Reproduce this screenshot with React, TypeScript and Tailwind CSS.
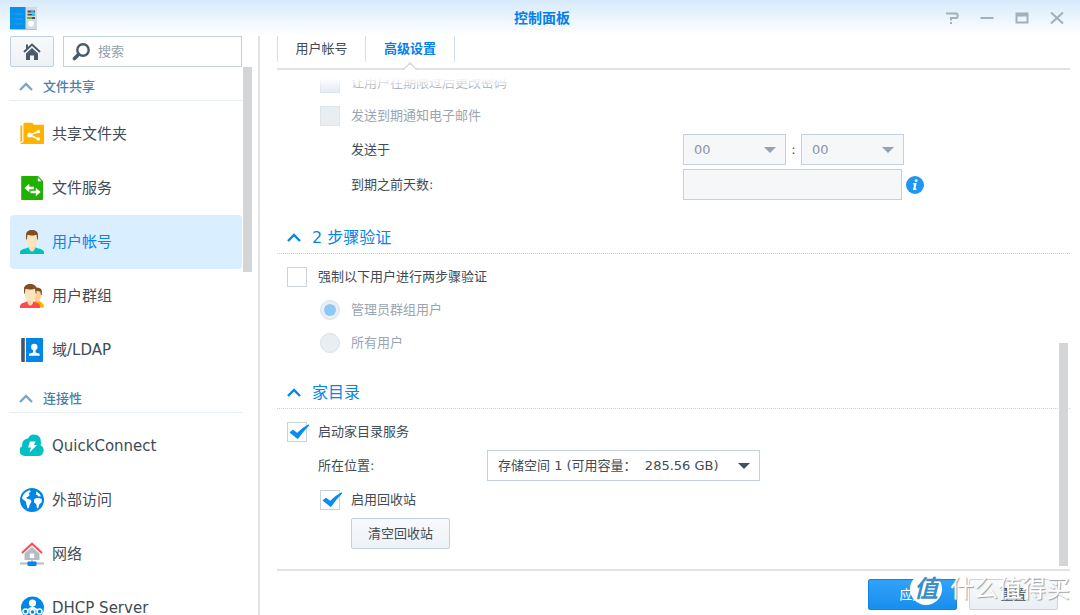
import React, { useState } from "react";

interface NavItem {
  id: string;
  label: string;
  icon: React.ReactNode;
}

interface NavGroup {
  title: string;
  items: NavItem[];
}

const SharedFolderIcon = () => (
  <svg viewBox="0 0 24 24" className="size-6">
    <path d="M.4 3.500h1.800V19L.4 20.500z" fill="#ffb300" />
    <path d="M3.400 2.200Q3.400.8 4.700.8h7.500l1.800 2h9.200q.8 0 .8.800v17.500q0 .9-.9.900H.9q-.5 0-.5-.6l3-1.400z" fill="#ffb300" />
    <path d="M18.500 9.500 9.800 13l8.700 4" fill="none" stroke="#fff" strokeWidth="1.500" />
    <circle cx="9.800" cy="13" r="2.500" fill="#fff" />
    <circle cx="18.400" cy="9.600" r="1.700" fill="#fff" />
    <circle cx="18.400" cy="16.900" r="1.700" fill="#fff" />
  </svg>
);

const FileServiceIcon = () => (
  <svg viewBox="0 0 24 24" className="size-6">
    <path d="M2 0h16l5 5v18q0 1-1 1H2q-.8 0-.8-1V1q0-1 .8-1z" fill="#20b100" />
    <path d="M17.800 1.500v3.800h3.800z" fill="#fff" />
    <path d="M4.500 12 9.300 7.800v3h4.500v2.400H9.300v3zM20.600 16l-4.800-4.200v3h-5.300v2.400h5.300v3z" fill="#fff" />
  </svg>
);

const UserIcon = () => (
  <svg viewBox="0 0 24 24" className="size-6">
    <path d="M0 24v-1.500c0-3.500 5-3.500 8.500-5h7c3.500 1.500 8.500 1.500 8.500 5V24z" fill="#00bfbf" />
    <path d="M9 13.500h6v4.700c0 1-1.500 3.300-3 3.300s-3-2.300-3-3.300z" fill="#fddcae" />
    <path d="M6.500 5h11v5c0 4-2.800 7.500-5.500 7.500S6.500 14 6.500 10z" fill="#ffe3bc" />
    <path d="M6 9.500V5c0-3.500 2.500-5 6-5s6 1.500 6 5v4.500h-.8L16.500 4.800c-2 1-6.500 1-9 0L6.800 9.500z" fill="#7d5026" />
  </svg>
);

const GroupIcon = () => (
  <svg viewBox="0 0 24 24" className="size-6">
    <path d="M15 23.500v-7h4c1 1.500 5 2.500 5 6v1z" fill="#ffb300" />
    <path d="M14 6h7.500v4.500c0 3-1.500 6-3.500 7.500l-4-2z" fill="#fdd09a" />
    <path d="M15 3.500c4-.5 6.800 1 6.800 3.500v4H21l-.8-3.500L15 6.500z" fill="#7d5026" />
    <path d="M0 24v-1.500C0 19 4 19 6.500 17.500H14c3 1.500 6 1.500 6 5V24z" fill="#ff4b50" />
    <path d="M7.500 13.500h5.500v4.700c0 1-1 3.300-2.700 3.300s-2.800-2.300-2.800-3.300z" fill="#fddcae" />
    <path d="M4.500 5H16v5c0 4-3 7.700-5.700 7.700S4.500 14 4.500 10z" fill="#ffe3bc" />
    <path d="M4 9.500V5c0-3.500 2.700-5 6.200-5s6.300 1.500 6.300 5v4.500h-.8L15 4.800c-2 1-7 1-9.500 0L4.800 9.500z" fill="#7d5026" />
  </svg>
);

const DirectoryIcon = () => (
  <svg viewBox="0 0 24 24" className="size-6">
    <path d="M2.200 0h2.600v24H2.200q-1 0-1-1V1q0-1 1-1z" fill="#465663" />
    <path d="M6 0h16q1 0 1 1v22q0 1-1 1H6z" fill="#0086e5" />
    <circle cx="14.300" cy="9" r="3.200" fill="#fff" />
    <path d="M13 11h2.600v3.400l4 1.300v2H9v-2l4-1.300z" fill="#fff" />
  </svg>
);

const QuickConnectIcon = () => (
  <svg viewBox="0 0 24 24" className="size-6">
    <path
      d="M5 22A5.200 5.200 0 0 1 2.200 12.200Q1.500 5.500 8 4.500A6.700 6.700 0 0 1 20.800 7.500q.4 2-.2 3.800A5.700 5.700 0 0 1 18.500 22z"
      fill="#00c0c3"
    />
    <path d="M10 7.500h5.500l-1.500 3.500h3L9.500 18.500l1.500-5H8z" fill="#fff" />
  </svg>
);

const GlobeIcon = () => (
  <svg viewBox="0 0 24 24" className="size-6">
    <circle cx="12" cy="12" r="12" fill="#0086e5" />
    <path d="M2 10.500C3 6 6 3 10 2.300l.7 1.500-2 1.400 1 2L7.500 9l-1.500.7 1.200 1 3.300.8 1 2-1.700 3-1 3.500-1.300.5-1.200-4.500-.5-2.500-2-1.500z" fill="#fff" />
    <path d="m14 11.500 2.500-1.500 3.500.3 2 1-.5 3.200-2 1.500-1.200 4-1.300.5-.8-4.500-2.200-1.500zM16.300 3.500l2.700 1.800 2 3-2.500.2-1.300-1.500-1.400-.5z" fill="#fff" />
  </svg>
);

const NetworkIcon = () => (
  <svg viewBox="0 0 24 24" className="size-6">
    <path d="M4.500 11.500 12 5l7.500 6.500V18h-15z" fill="#b2bdc7" />
    <rect x="9.800" y="11.500" width="4.400" height="4.500" fill="#fff" />
    <path d="M11.200 17.500h1.600V20h-1.600zM0 20.600h24v1.800H0z" fill="#b2bdc7" />
    <rect x="7.500" y="19.500" width="9" height="4.500" rx="0.800" fill="#0086e5" />
    <path d="M2 11 12 1.700 22 11" fill="none" stroke="#ff4b50" strokeWidth="2" />
  </svg>
);

const DhcpIcon = () => (
  <svg viewBox="0 0 24 24" className="size-6">
    <circle cx="12.500" cy="12" r="11.500" fill="#0086e5" />
    <circle cx="12.500" cy="7" r="3.600" fill="#fff" />
    <path d="M12.500 9v6M12.500 11 6 15M12.500 11l6.500 4" stroke="#fff" strokeWidth="1.600" />
    <g fill="#0086e5" stroke="#fff" strokeWidth="1.500">
      <circle cx="5.500" cy="15.500" r="2.500" />
      <circle cx="12.500" cy="16" r="2.500" />
      <circle cx="19.500" cy="15.500" r="2.500" />
    </g>
  </svg>
);

const navGroups: NavGroup[] = [
  {
    title: "文件共享",
    items: [
      { id: "shared", label: "共享文件夹", icon: <SharedFolderIcon /> },
      { id: "file", label: "文件服务", icon: <FileServiceIcon /> },
      { id: "user", label: "用户帐号", icon: <UserIcon /> },
      { id: "group", label: "用户群组", icon: <GroupIcon /> },
      { id: "ldap", label: "域/LDAP", icon: <DirectoryIcon /> },
    ],
  },
  {
    title: "连接性",
    items: [
      { id: "quickconnect", label: "QuickConnect", icon: <QuickConnectIcon /> },
      { id: "external", label: "外部访问", icon: <GlobeIcon /> },
      { id: "network", label: "网络", icon: <NetworkIcon /> },
      { id: "dhcp", label: "DHCP Server", icon: <DhcpIcon /> },
    ],
  },
];

const Chevron = () => (
  <svg viewBox="0 0 14 9" className="w-3.5 h-[9px]" fill="none" stroke="currentColor" strokeWidth="2.400">
    <path d="M1 8 7 2l6 6" />
  </svg>
);

const TitleBar = () => {
  const buttonClass = "flex w-[35px] h-9 items-center justify-center";
  return (
    <header className="flex h-9 shrink-0 items-center bg-linear-to-b from-[#d7eafb] to-white px-1.5">
      <div className="flex flex-1 pl-1">
        <svg viewBox="0 0 27 23" className="w-[27px] h-[23px]">
          <rect x="0" y="1" width="27" height="22" rx="1" fill="#b5bfc9" />
          <rect x="15" y="0" width="12" height="22" fill="#d3dae0" />
          <rect x="0" y="0" width="15.500" height="22" fill="#0a90ea" />
          <path d="M2 7h1M5 7h8M2 12h1M5 12h8M2 17h1M5 17h8" stroke="#16aef2" strokeWidth="1" />
          <path d="M17.500 4.500H25M17.500 7.700H25M17.500 11H25" stroke="#46525e" strokeWidth="1.800" />
          <path d="M21 4.500h3M22 7.700h3" stroke="#1dc5f2" strokeWidth="1.800" />
          <path d="M17.500 11H22" stroke="#63d000" strokeWidth="1.800" />
          <circle cx="21" cy="16.800" r="3" fill="#fff" />
        </svg>
      </div>
      <h1 className="text-sm leading-5 font-bold text-[#057feb]">控制面板</h1>
      <div className="flex flex-1 justify-end">
        <button aria-label="帮助" className={buttonClass}>
          <svg viewBox="0 0 14 12" className="w-3.5 h-3" fill="none" stroke="#a3afba" strokeWidth="2">
            <path d="M1 1.500h10.500q1 0 1 1v2.500q0 1-1 1H6v2.500M6 10v2" />
          </svg>
        </button>
        <button aria-label="最小化" className={buttonClass}>
          <svg viewBox="0 0 14 12" className="w-3.5 h-3" stroke="#a3afba" strokeWidth="2">
            <path d="M0.500 6h13" />
          </svg>
        </button>
        <button aria-label="最大化" className={buttonClass}>
          <svg viewBox="0 0 14 12" className="w-3.5 h-3">
            <path d="M0.500 0.500h13v11h-13zM2.500 4.500v5h9v-5z" fill="#a3afba" fillRule="evenodd" />
          </svg>
        </button>
        <button aria-label="关闭" className={buttonClass}>
          <svg viewBox="0 0 14 12" className="w-3.5 h-3" stroke="#a3afba" strokeWidth="2">
            <path d="M1 0.500 13 11.500M13 0.500 1 11.500" />
          </svg>
        </button>
      </div>
    </header>
  );
};

const Sidebar = () => {
  const [active, setActive] = useState("user");

  return (
    <aside className="flex w-[260px] shrink-0 flex-col border-r-2 border-[#e0e2e4] pl-2.5">
      <div className="flex shrink-0 gap-[9px] pr-4">
        <button
          aria-label="主页"
          className="flex h-[31px] w-11 items-center justify-center rounded-xs border border-[#c4d0dd] bg-linear-to-b from-[#f7fafc] to-[#edf2f7]"
        >
          <svg viewBox="0 0 18 18" className="size-[18px]">
            <path d="M3 10.500 9 5l6 5.500V17h-4v-4.500H7V17H3z" fill="#4b5a68" />
            <path d="M1 9 9 1.500 17 9M4 6V1.500" fill="none" stroke="#4b5a68" strokeWidth="2" />
          </svg>
        </button>
        <label className="flex h-[31px] min-w-0 flex-1 items-center gap-2 border border-[#c4d0dd] px-2">
          <svg viewBox="0 0 18 18" className="size-[18px] shrink-0" fill="none" stroke="#4b5a68">
            <circle cx="11" cy="7" r="5.700" strokeWidth="2.400" />
            <path d="M6.500 11.500 2.500 15.500" strokeWidth="3.600" strokeLinecap="round" />
          </svg>
          <input
            type="text"
            aria-label="搜索"
            placeholder="搜索"
            className="w-full min-w-0 text-[13px] leading-5 outline-none placeholder:text-[#96a0aa]"
          />
        </label>
      </div>

      <div className="flex min-h-0 flex-1 overflow-hidden">
        <nav className="min-w-0 flex-1">
          {navGroups.map((group) => (
            <section key={group.title} className="pb-0.5">
              <h2 className="border-b border-[#e6edf5]">
                <button className="flex h-[33px] w-full items-center gap-2.5 pt-1.5 pl-[9px] text-[13px] leading-5 font-medium text-[#4a7fa8]">
                  <span className="text-[#7fa5c2]">
                    <Chevron />
                  </span>
                  {group.title}
                </button>
              </h2>
              <ul className="pt-1.5">
                {group.items.map((item) => (
                  <li key={item.id}>
                    <a
                      href={"#" + item.id}
                      onClick={() => setActive(item.id)}
                      className={
                        item.id === active
                          ? "flex h-[54px] items-center gap-2 rounded-sm bg-[#d9eeff] pl-2.5 text-[15px] leading-6 text-[#0686ed]"
                          : "flex h-[54px] items-center gap-2 rounded-sm pl-2.5 text-[15px] leading-6 text-[#414b55]"
                      }
                    >
                      {item.icon}
                      {item.label}
                    </a>
                  </li>
                ))}
              </ul>
            </section>
          ))}
        </nav>
        <div className="w-4 shrink-0 pl-px">
          <div className="h-[205px] w-[9px] bg-[#d3d5d7]" />
        </div>
      </div>
    </aside>
  );
};

interface CheckProps {
  label: string;
  checked?: boolean;
  disabled?: boolean;
}

const CheckRow: React.FC<CheckProps> = ({ label, checked, disabled }) => (
  <label className="flex h-[33px] w-fit items-center gap-[11px] text-[13px] leading-5 text-[#414b55] has-disabled:text-[#9aa5af]">
    <span className="relative flex">
      <input
        type="checkbox"
        defaultChecked={checked}
        disabled={disabled}
        className="peer size-5 appearance-none border border-[#c8d3de] bg-white disabled:border-[#dce4ec] disabled:bg-[#e9eef3]"
      />
      <svg
        viewBox="0 0 20 20"
        className="pointer-events-none absolute top-0 left-0.5 hidden size-5 peer-checked:block"
      >
        <path d="M1.500 10.500 4 8.500 8.200 11.800Q13 6.500 19.500 3.200 13.500 9 8.800 16.200z" fill="#0a8cf0" stroke="#0a8cf0" strokeWidth="1.400" strokeLinejoin="round" />
      </svg>
    </span>
    {label}
  </label>
);

const RadioRow: React.FC<CheckProps> = ({ label, checked }) => (
  <label className="flex h-[33px] w-fit items-center gap-[11px] text-[13px] leading-5 text-[#9aa5af]">
    <span className="relative flex">
      <input
        type="radio"
        name="otp-scope"
        defaultChecked={checked}
        disabled
        className="peer size-5 appearance-none rounded-full border border-[#d9e2ea] bg-[#e9eef3]"
      />
      <span className="absolute inset-1 hidden rounded-full bg-[#90c8f5] peer-checked:block" />
    </span>
    {label}
  </label>
);

interface SelectProps {
  id?: string;
  label?: string;
  value: string;
  wrapperClass: string;
  disabled?: boolean;
}

const SelectBox: React.FC<SelectProps> = ({ id, label, value, wrapperClass, disabled }) => (
  <div className={"relative " + wrapperClass}>
    <select
      id={id}
      aria-label={label}
      disabled={disabled}
      className="h-[31px] w-full appearance-none border border-[#c4d0dd] bg-white pr-7 pl-2.5 text-[13px] leading-5 text-[#414b55] disabled:bg-[#f5f7f9] disabled:text-[#8c959e] disabled:opacity-100"
    >
      <option>{value}</option>
    </select>
    <svg
      viewBox="0 0 12 6"
      className={
        disabled
          ? "pointer-events-none absolute top-[13px] right-2.5 h-1.5 w-3 fill-[#95a2af]"
          : "pointer-events-none absolute top-[13px] right-2.5 h-1.5 w-3 fill-[#414f5c]"
      }
    >
      <path d="M0 0h12L6 6z" />
    </svg>
  </div>
);

const SectionTitle: React.FC<{ title: string }> = ({ title }) => (
  <h2 className="border-b border-dotted border-[#c3d0dd]">
    <button className="flex h-[33px] w-full items-center gap-[11px] pt-0.5 pl-2.5 text-base leading-6 text-[#0686ed]">
      <Chevron />
      {title}
    </button>
  </h2>
);

const Tabs = () => (
  <div role="tablist" className="flex h-[34px] shrink-0 items-start border-b-2 border-[#e0e2e4]">
    <button
      role="tab"
      className="h-[26px] w-22 border-l border-[#d5e0eb] text-[13px] leading-[26px] text-[#414b55]"
    >
      用户帐号
    </button>
    <button
      role="tab"
      aria-selected="true"
      className="relative h-[26px] w-[90px] border-x border-[#d5e0eb] text-[13px] leading-[26px] font-bold text-[#057feb]"
    >
      高级设置
      <svg viewBox="0 0 16 8" className="absolute top-[26px] left-9 h-2 w-4">
        <path d="M1 8 8 1l7 7z" fill="#fff" />
        <path d="M0 7.500h1.500L8 1l6.500 6.500H16" fill="none" stroke="#d9dbdd" strokeWidth="1.500" />
      </svg>
    </button>
  </div>
);

const Settings = () => (
  <div className="relative min-h-0 flex-1 overflow-hidden">
    <div className="-mt-1 pl-[43px]">
      <CheckRow label="让用户在期限过后更改密码" disabled />
      <CheckRow label="发送到期通知电子邮件" disabled />
      <div className="flex flex-col gap-1 pt-0.5 pl-[31px] text-[13px] leading-5 text-[#414b55]">
        <div className="flex items-center">
          <label htmlFor="send-hour" className="w-[332px]">
            发送于
          </label>
          <SelectBox id="send-hour" value="00" wrapperClass="w-[103px]" disabled />
          <span className="w-[15px] text-center">:</span>
          <SelectBox label="分钟" value="00" wrapperClass="w-[103px]" disabled />
        </div>
        <div className="flex items-center">
          <label htmlFor="days" className="w-[332px]">
            到期之前天数:
          </label>
          <input id="days" type="text" disabled className="h-[31px] w-[219px] border border-[#c4d0dd] bg-[#f5f7f9] px-2" />
          <svg viewBox="0 0 18 18" className="ml-1 size-[18px]">
            <circle cx="9" cy="9" r="9" fill="#1e96f2" />
            <circle cx="10.200" cy="4.700" r="1.400" fill="#fff" />
            <path d="M7.400 7h3.300l-1.300 5.600h1.100l-.3 1.400H6.900l1.300-5.600H7.100z" fill="#fff" />
          </svg>
        </div>
      </div>
    </div>

    <section className="pt-5">
      <SectionTitle title="2 步骤验证" />
      <div className="pt-1.5 pl-2.5">
        <CheckRow label="强制以下用户进行两步骤验证" />
        <div className="pl-[33px]">
          <RadioRow label="管理员群组用户" checked />
          <RadioRow label="所有用户" />
        </div>
      </div>
    </section>

    <section className="pt-4">
      <SectionTitle title="家目录" />
      <div className="pt-1.5 pl-2.5 text-[13px] leading-5 text-[#414b55]">
        <CheckRow label="启动家目录服务" checked />
        <div className="flex items-center py-0.5 pl-[31px]">
          <label htmlFor="volume" className="w-[169px]">
            所在位置:
          </label>
          <SelectBox id="volume" value={"存储空间 1 (可用容量：\u00a0 285.56 GB)"} wrapperClass="w-[273px]" />
        </div>
        <div className="pl-[33px]">
          <CheckRow label="启用回收站" checked />
          <button className="mt-0.5 ml-[31px] h-[31px] rounded-xs border border-[#c4d0dd] bg-linear-to-b from-[#f8fafc] to-[#edf2f7] px-4">
            清空回收站
          </button>
        </div>
      </div>
    </section>

    <div className="pointer-events-none absolute inset-x-0 top-0 h-5 bg-linear-to-b from-white from-40% to-transparent" />
    <div className="absolute right-0.5 bottom-[3px] h-[223px] w-[9px] bg-[#d3d5d7]" />
  </div>
);

const Watermark = () => (
  <div className="pointer-events-none absolute right-2.5 bottom-2.5 flex items-center gap-2">
    <span className="flex size-8 items-center justify-center rounded-full bg-white text-2xl leading-8 font-bold text-[#3a8fcb] italic">
      值
    </span>
    <span className="text-2xl leading-8 text-white [text-shadow:1px_1px_1px_#9a9fa4]">什么值得买</span>
  </div>
);

export default function App() {
  return (
    <div className="relative flex h-screen flex-col overflow-hidden bg-white font-['DejaVu_Sans','Noto_Sans_CJK_SC',sans-serif]">
      <TitleBar />
      <div className="flex min-h-0 flex-1">
        <Sidebar />
        <main className="flex min-w-0 flex-1 flex-col pr-2.5 pl-[17px]">
          <Tabs />
          <Settings />
          <footer className="flex h-[46px] shrink-0 items-start justify-end gap-3 border-t-2 border-[#e0e2e4] pt-2 pr-3 text-[13px] leading-5">
            <button className="h-[31px] w-[89px] rounded-xs border border-[#1583dc] bg-linear-to-b from-[#30a2fb] to-[#178fec] text-white">
              应用
            </button>
            <button className="h-[31px] w-[89px] rounded-xs border border-[#c9d4df] bg-linear-to-b from-[#f8fafc] to-[#e9eff5] text-[#414b55]">
              重置
            </button>
          </footer>
        </main>
      </div>
      <Watermark />
    </div>
  );
}
